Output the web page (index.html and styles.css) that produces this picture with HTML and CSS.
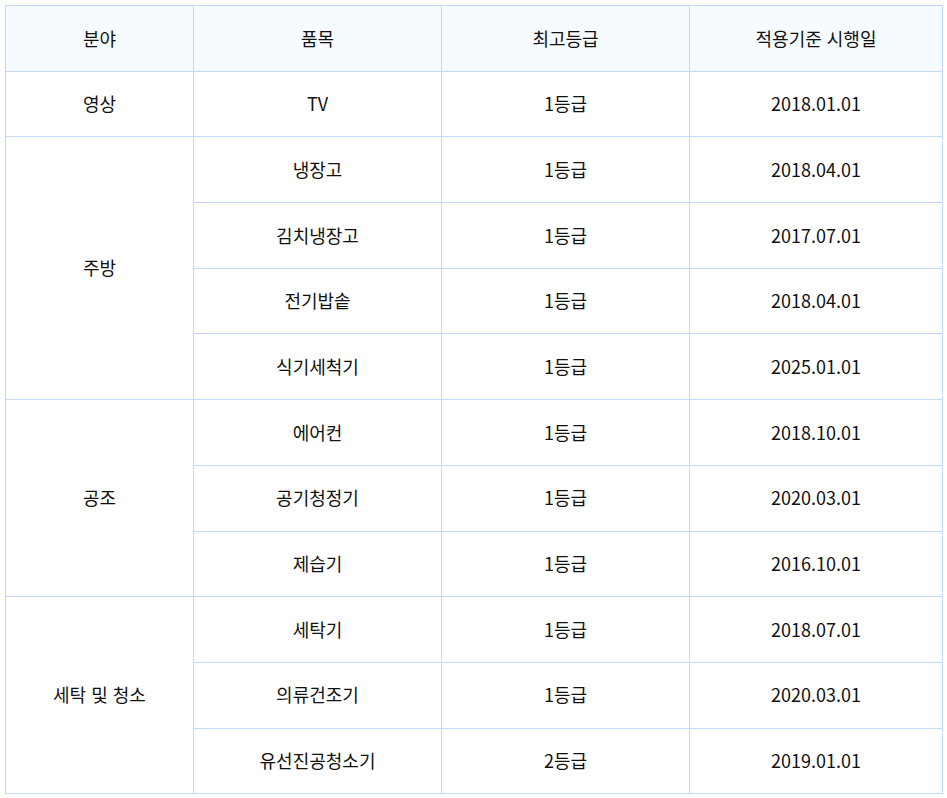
FILE: index.html
```html
<!DOCTYPE html>
<html lang="ko">
<head>
<meta charset="utf-8">
<link rel="stylesheet" href="styles.css">
</head>
<body>
<table class="grade-table">
  <colgroup>
    <col class="c1"><col class="c2"><col class="c3"><col class="c4">
  </colgroup>
  <thead>
    <tr><th>분야</th><th>품목</th><th>최고등급</th><th>적용기준 시행일</th></tr>
  </thead>
  <tbody>
    <tr><td>영상</td><td>TV</td><td>1등급</td><td>2018.01.01</td></tr>
    <tr><td rowspan="4">주방</td><td>냉장고</td><td>1등급</td><td>2018.04.01</td></tr>
    <tr><td>김치냉장고</td><td>1등급</td><td>2017.07.01</td></tr>
    <tr><td>전기밥솥</td><td>1등급</td><td>2018.04.01</td></tr>
    <tr><td>식기세척기</td><td>1등급</td><td>2025.01.01</td></tr>
    <tr><td rowspan="3">공조</td><td>에어컨</td><td>1등급</td><td>2018.10.01</td></tr>
    <tr><td>공기청정기</td><td>1등급</td><td>2020.03.01</td></tr>
    <tr><td>제습기</td><td>1등급</td><td>2016.10.01</td></tr>
    <tr><td rowspan="3">세탁 및 청소</td><td>세탁기</td><td>1등급</td><td>2018.07.01</td></tr>
    <tr><td>의류건조기</td><td>1등급</td><td>2020.03.01</td></tr>
    <tr><td>유선진공청소기</td><td>2등급</td><td>2019.01.01</td></tr>
  </tbody>
</table>
</body>
</html>
```
FILE: styles.css
```css
html, body {
  margin: 0;
  padding: 0;
  background: #fff;
}
body {
  padding: 5px 5px 0 5px;
  font-family: "Noto Sans CJK KR", "Noto Sans", sans-serif;
  color: #111;
}
.grade-table {
  width: 937px;
  border-collapse: collapse;
  table-layout: fixed;
  font-size: 18px;
}
.c1 { width: 188px; }
.c2 { width: 248px; }
.c3 { width: 248px; }
.c4 { width: 253px; }
.grade-table th,
.grade-table td {
  border: 1px solid #c4d9f7;
  height: 64.7px;
  padding: 0;
  text-align: center;
  vertical-align: middle;
  font-weight: 400;
  line-height: 1.2;
}
.grade-table thead th {
  background: #f5fbff;
}
```
